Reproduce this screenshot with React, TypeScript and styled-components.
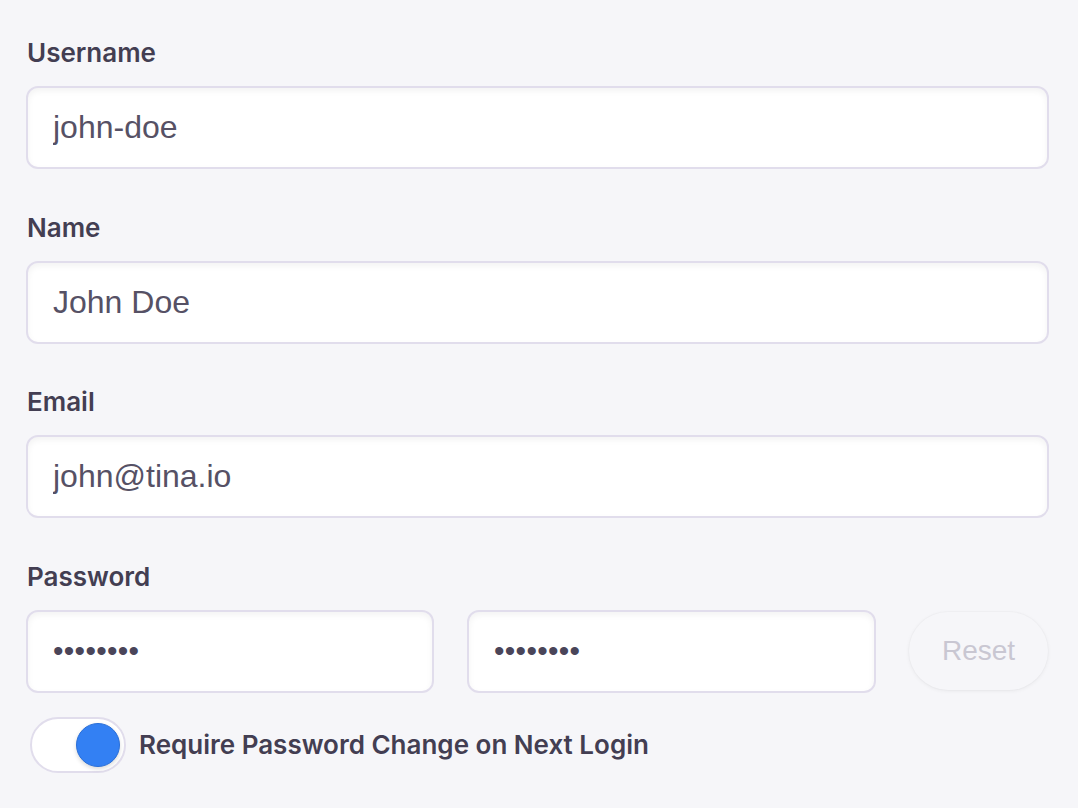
import React from "react";
import styled, { createGlobalStyle } from "styled-components";

const GlobalStyle = createGlobalStyle`
  html, body {
    margin: 0;
    padding: 0;
    background: #f6f6f9;
  }
  body {
    font-family: Inter, "Liberation Sans", sans-serif;
  }
`;

const Form = styled.form`
  box-sizing: border-box;
  width: 1078px;
  min-height: 808px;
  padding: 37px 29px 0 26px;
  background: #f6f6f9;
`;

const Field = styled.div`
  display: flex;
  flex-direction: column;
  margin-bottom: 42.5px;
`;

const Label = styled.label`
  display: block;
  font-family: Inter, "Liberation Sans", sans-serif;
  font-size: 26px;
  font-weight: 600;
  line-height: 32px;
  color: #433e52;
  margin: 0 0 17px 1px;
`;

const TextInput = styled.input`
  box-sizing: border-box;
  width: 100%;
  height: 83px;
  padding: 0 25px;
  border: 2px solid #e1ddec;
  border-radius: 12px;
  background: #ffffff;
  box-shadow: inset 0 3px 6px rgba(0, 0, 0, 0.05);
  font-family: "Liberation Sans", Arial, sans-serif;
  font-size: 32px;
  color: #565165;
  outline: none;
`;

const PasswordRow = styled.div`
  display: grid;
  grid-template-columns: 408px 409px 139px;
  column-gap: 33px;
  align-items: center;
`;

const PasswordInput = styled(TextInput)`
  font-size: 30px;
  color: #4a4559;
  letter-spacing: 0.3px;
`;

const ResetButton = styled.button`
  height: 78px;
  width: 139px;
  border: none;
  border-radius: 39px;
  background: #f6f6f9;
  box-shadow: 0 1px 4px rgba(0, 0, 0, 0.06), 0 0 0 1px rgba(0, 0, 0, 0.015);
  font-family: "Liberation Sans", Arial, sans-serif;
  font-size: 28px;
  color: #c9c7d2;
  padding: 0;
  cursor: default;
`;

const ToggleRow = styled.div`
  display: flex;
  align-items: center;
  gap: 13px;
  margin: 24px 0 0 4px;
`;

const ToggleTrack = styled.div`
  box-sizing: border-box;
  position: relative;
  width: 96px;
  height: 56px;
  border: 2px solid #e1ddec;
  border-radius: 28px;
  background: #ffffff;
  flex-shrink: 0;
`;

const ToggleKnob = styled.div<{ $on: boolean }>`
  position: absolute;
  box-sizing: border-box;
  top: 4px;
  left: ${(p) => (p.$on ? "44px" : "4px")};
  width: 44px;
  height: 44px;
  border-radius: 50%;
  background: #3380f3;
  border: 1px solid #2a6fd8;
  box-shadow: 0 2px 4px rgba(0, 0, 0, 0.15);
`;

const ToggleText = styled.span`
  font-family: Inter, "Liberation Sans", sans-serif;
  font-size: 26px;
  font-weight: 600;
  color: #433e52;
  line-height: 32px;
`;

export default function App() {
  return (
    <>
      <GlobalStyle />
      <Form onSubmit={(e) => e.preventDefault()}>
        <Field>
          <Label>Username</Label>
          <TextInput readOnly value="john-doe" />
        </Field>
        <Field>
          <Label>Name</Label>
          <TextInput readOnly value="John Doe" />
        </Field>
        <Field>
          <Label>Email</Label>
          <TextInput readOnly value="john@tina.io" />
        </Field>
        <div>
          <Label>Password</Label>
          <PasswordRow>
            <PasswordInput type="password" readOnly value="password" />
            <PasswordInput type="password" readOnly value="password" />
            <ResetButton type="button">Reset</ResetButton>
          </PasswordRow>
        </div>
        <ToggleRow>
          <ToggleTrack>
            <ToggleKnob $on />
          </ToggleTrack>
          <ToggleText>Require Password Change on Next Login</ToggleText>
        </ToggleRow>
      </Form>
    </>
  );
}
